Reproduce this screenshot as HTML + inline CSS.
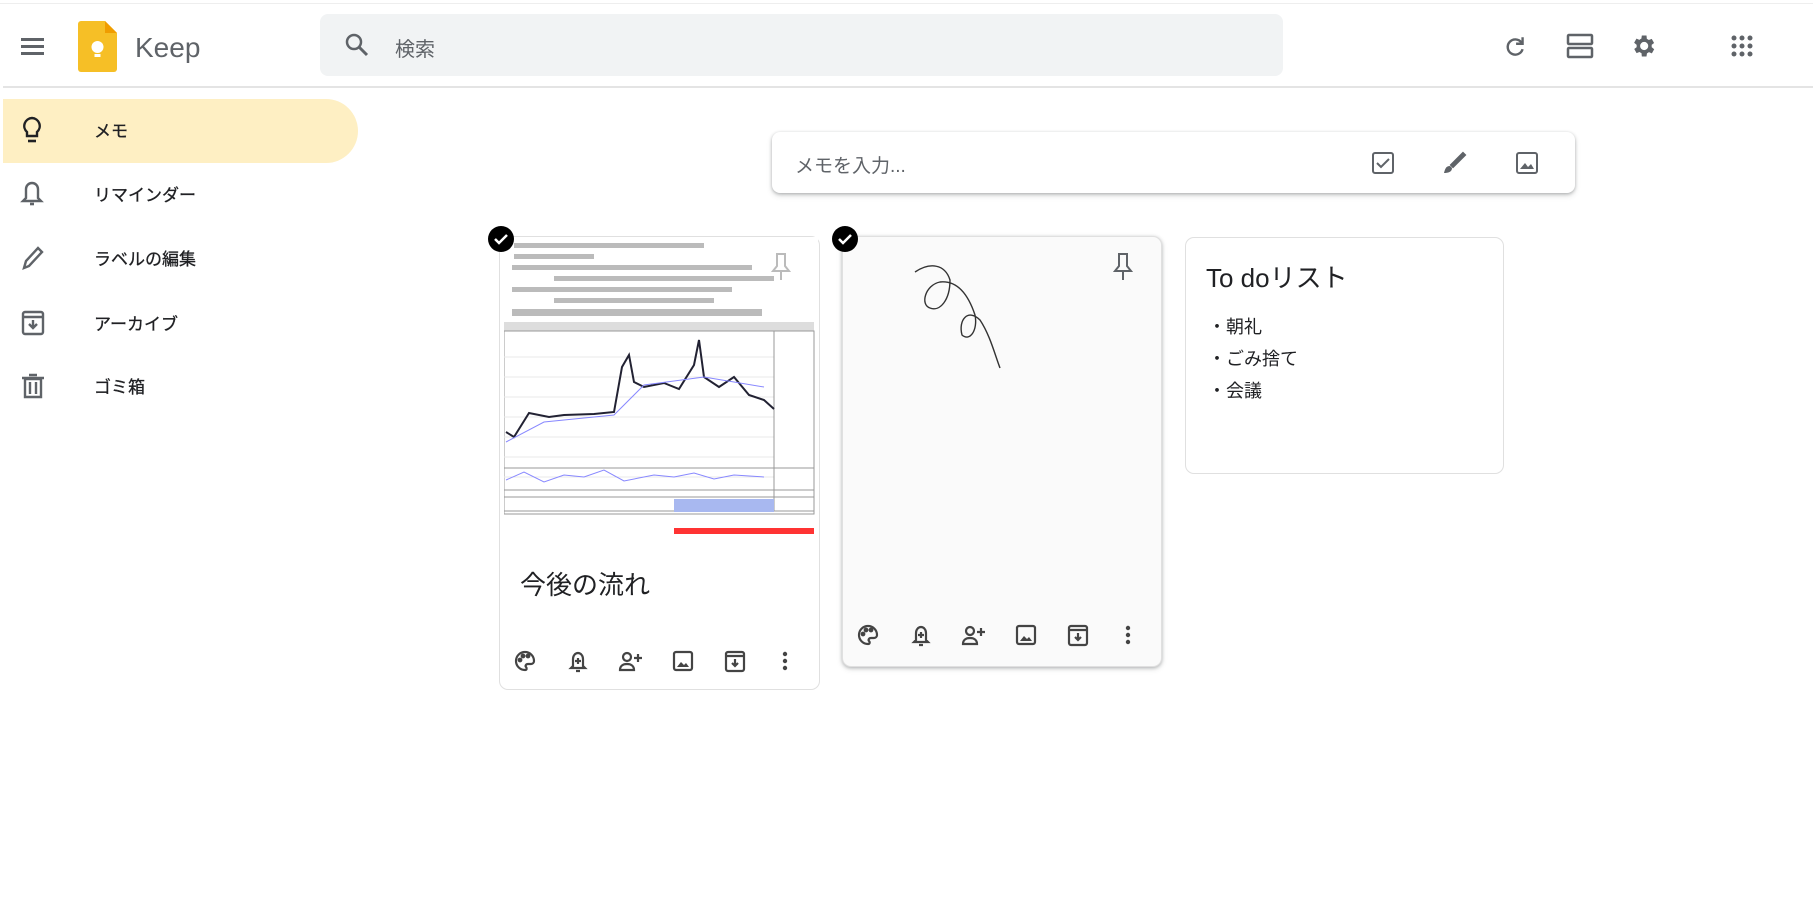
<!DOCTYPE html>
<html><head><meta charset="utf-8"><style>
*{box-sizing:border-box;margin:0;padding:0}
body{width:1813px;height:898px;background:#fff;font-family:"Liberation Sans","Noto Sans CJK JP",sans-serif;color:#202124;position:relative;overflow:hidden}
.a{position:absolute}
svg.i{position:absolute;fill:none;stroke:#5f6368;stroke-width:2}
.nav{position:absolute;left:94px;font-size:17px;color:#202124;-webkit-text-stroke:0.3px #202124}
.card{position:absolute;border:1px solid #e0e0e0;border-radius:9px;background:#fff}
.chk{position:absolute;width:26px;height:26px;border-radius:50%;background:#000}
</style></head><body>
<div class="a" style="left:0;top:3px;width:1813px;height:1px;background:#eee"></div>
<div class="a" style="left:3px;top:86px;width:1810px;height:2px;background:#e4e4e4"></div>
<div class="a" style="left:21px;top:38px;width:23px;height:2.5px;background:#5f6368;box-shadow:0 7px 0 #5f6368,0 14px 0 #5f6368"></div>
<svg class="a" style="left:78px;top:21px" width="39" height="51" viewBox="0 0 39 51"><path d="M3 0H27L39 12V48a3 3 0 0 1-3 3H3a3 3 0 0 1-3-3V3a3 3 0 0 1 3-3z" fill="#f6bf26"/><path d="M27 0V12H39z" fill="#f09d00"/><circle cx="19.5" cy="26" r="6" fill="#fff"/><rect x="16.5" y="33" width="6" height="3" fill="#fff"/></svg>
<div class="a" style="left:135px;top:32px;font-size:28px;color:#5f6368">Keep</div>
<div class="a" style="left:320px;top:14px;width:963px;height:62px;background:#f1f3f4;border-radius:8px"></div>
<svg class="i" style="left:344px;top:32px" width="26" height="26" viewBox="0 0 26 26"><circle cx="10" cy="10" r="7" stroke-width="2.5"/><path d="M15 15l8 8" stroke-width="3"/></svg>
<div class="a" style="left:395px;top:33px;font-size:20px;color:#5f6368">検索</div>
<svg class="i" style="left:1502px;top:34px" width="26" height="26" viewBox="0 0 24 24"><path d="M18 8A7 7 0 1 0 19 14" stroke-width="2.2"/><path d="M19 3v6h-6" stroke-width="2.2"/></svg>
<svg class="i" style="left:1566px;top:32px" width="28" height="28" viewBox="0 0 28 28"><rect x="2" y="3" width="24" height="9" rx="1" stroke-width="2.5"/><rect x="2" y="16" width="24" height="9" rx="1" stroke-width="2.5"/></svg>
<svg class="a" style="left:1629px;top:32px" width="28" height="28" viewBox="0 0 24 24"><path fill="#5f6368" d="M19.4 13a7.5 7.5 0 0 0 0-2l2.1-1.6-2-3.5-2.5 1a7.3 7.3 0 0 0-1.7-1L15 3h-4l-.4 2.7a7.3 7.3 0 0 0-1.700 1l-2.5-1-2 3.5L6.6 11a7.5 7.5 0 0 0 0 2l-2.1 1.6 2 3.5 2.5-1a7.3 7.3 0 0 0 1.7 1L11 21h4l.4-2.7a7.3 7.3 0 0 0 1.7-1l2.5 1 2-3.5zM13 15.5a3.5 3.5 0 1 1 0-7 3.5 3.5 0 0 1 0 7z"/><circle cx="13" cy="12" r="2.2" fill="#fff"/></svg>
<svg class="a" style="left:1731px;top:35px" width="22" height="22" viewBox="0 0 22 22" fill="#5f6368"><circle cx="3" cy="3" r="2.5"/><circle cx="11" cy="3" r="2.5"/><circle cx="19" cy="3" r="2.5"/><circle cx="3" cy="11" r="2.5"/><circle cx="11" cy="11" r="2.5"/><circle cx="19" cy="11" r="2.5"/><circle cx="3" cy="19" r="2.5"/><circle cx="11" cy="19" r="2.5"/><circle cx="19" cy="19" r="2.5"/></svg>
<div class="a" style="left:3px;top:99px;width:355px;height:64px;background:#feefc3;border-radius:0 32px 32px 0"></div>
<svg class="i" style="left:20px;top:116px" width="24" height="28" viewBox="0 0 24 28"><path d="M12 2a8 8 0 0 0-5 14v4h10v-4a8 8 0 0 0-5-14z" stroke="#202124" stroke-width="2.4"/><path d="M8 25h8" stroke="#202124" stroke-width="2.6"/></svg>
<div class="nav" style="top:117px">メモ</div>
<svg class="i" style="left:20px;top:180px" width="24" height="28" viewBox="0 0 24 28"><path d="M12 3a6 6 0 0 0-6 6v9l-3 3h18l-3-3V9a6 6 0 0 0-6-6z" stroke-width="2.4"/><path d="M10 24h4" stroke-width="2.6"/></svg>
<div class="nav" style="top:181px">リマインダー</div>
<svg class="i" style="left:20px;top:244px" width="26" height="28" viewBox="0 0 26 28"><path d="M4 24l2-7L18 4l4 4L9 22z" stroke-width="2.4"/></svg>
<div class="nav" style="top:245px">ラベルの編集</div>
<svg class="i" style="left:20px;top:309px" width="26" height="28" viewBox="0 0 26 28"><rect x="3" y="3" width="20" height="22" rx="2" stroke-width="2.4"/><path d="M3 8h20M13 11v8M9 15l4 4 4-4" stroke-width="2.4"/></svg>
<div class="nav" style="top:310px">アーカイブ</div>
<svg class="i" style="left:20px;top:372px" width="26" height="28" viewBox="0 0 26 28"><path d="M5 7h16v18H5zM2 6h22M9 3h8M10 10v12M16 10v12" stroke-width="2.4"/></svg>
<div class="nav" style="top:373px">ゴミ箱</div>
<div class="a" style="left:772px;top:132px;width:803px;height:61px;border-radius:8px;background:#fff;box-shadow:0 1px 3px rgba(60,64,67,.35),0 3px 6px rgba(60,64,67,.15)"></div>
<div class="a" style="left:795px;top:151px;font-size:19px;color:#5f6368">メモを入力...</div>
<svg class="i" style="left:1370px;top:150px" width="26" height="26" viewBox="0 0 26 26"><rect x="3" y="3" width="20" height="20" rx="2"/><path d="M7 13l4 4 8-8"/></svg>
<svg class="i" style="left:1441px;top:150px" width="26" height="26" viewBox="0 0 26 26"><path d="M22 3L10 15l2 2L24 5z" fill="#5f6368"/><path d="M9 16c-4 0-5 3-6 7 4 0 8-1 8-5z" fill="#5f6368" stroke="none"/></svg>
<svg class="i" style="left:1514px;top:150px" width="26" height="26" viewBox="0 0 26 26"><rect x="3" y="3" width="20" height="20" rx="2"/><path d="M6 19l5-6 3 4 3-3 3 5z" fill="#5f6368" stroke="none"/></svg>
<div class="card" style="left:499px;top:236px;width:321px;height:454px"></div>
<svg class="a" style="left:504px;top:237px" width="314" height="306" viewBox="0 0 314 306">
<rect width="314" height="306" fill="#fff"/>
<g fill="#bbb"><rect x="10" y="6" width="190" height="5"/><rect x="10" y="17" width="80" height="5"/><rect x="8" y="28" width="240" height="5"/><rect x="50" y="39" width="220" height="5"/><rect x="8" y="50" width="220" height="5"/><rect x="50" y="61" width="160" height="5"/><rect x="8" y="72" width="250" height="7"/></g>
<rect x="0" y="85" width="310" height="9" fill="#ddd"/>
<rect x="0" y="94" width="310" height="180" fill="none" stroke="#999"/>
<g stroke="#e8e8e8"><path d="M0 120h270M0 140h270M0 160h270M0 180h270M0 200h270M0 220h270M0 240h270"/></g>
<path d="M270 94v180" stroke="#999"/>
<polyline fill="none" stroke="#223" stroke-width="2" points="2,195 10,200 25,176 45,180 60,178 90,177 110,175 118,130 125,118 130,145 140,150 160,146 175,152 190,128 195,103 200,140 215,150 230,140 245,158 260,163 270,172"/>
<polyline fill="none" stroke="#88f" stroke-width="1" points="2,205 40,185 110,178 140,148 200,140 260,150"/>
<path d="M0 231h310M0 253h310" stroke="#999"/>
<polyline fill="none" stroke="#88f" points="2,243 20,235 40,245 60,238 80,240 100,233 120,244 150,238 170,240 190,236 210,242 230,238 260,240"/>
<rect x="0" y="260" width="310" height="17" fill="none" stroke="#999"/>
<rect x="170" y="262" width="100" height="13" fill="#a8b8f0"/>
<rect x="170" y="291" width="140" height="6" fill="#f33"/>
</svg>
<div class="chk" style="left:488px;top:226px"></div>
<svg class="a" style="left:493px;top:231px" width="16" height="16" viewBox="0 0 16 16"><path d="M2 8l4 4 8-8" stroke="#fff" stroke-width="2.5" fill="none"/></svg>
<svg class="i" style="left:768px;top:252px" width="26" height="30" viewBox="0 0 26 30"><path d="M8 2h10M9 2v12l-4 5h16l-4-5V2M13 19v9" stroke="#bbb"/></svg>
<div class="a" style="left:520px;top:565px;font-size:26px">今後の流れ</div>
<div class="card" style="left:842px;top:236px;width:320px;height:431px;background:#fafafa;box-shadow:0 1px 3px rgba(60,64,67,.3),0 2px 6px rgba(60,64,67,.15)"></div>
<div class="chk" style="left:832px;top:226px"></div>
<svg class="a" style="left:837px;top:231px" width="16" height="16" viewBox="0 0 16 16"><path d="M2 8l4 4 8-8" stroke="#fff" stroke-width="2.5" fill="none"/></svg>
<svg class="i" style="left:1110px;top:252px" width="26" height="30" viewBox="0 0 26 30"><path d="M8 2h10M9 2v12l-4 5h16l-4-5V2M13 19v9"/></svg>
<svg class="a" style="left:900px;top:260px" width="140" height="120" viewBox="0 0 140 120"><path d="M15 12C30 2 45 4 50 20 50 40 40 52 30 48 20 45 25 25 40 22 60 20 70 40 75 55 78 70 70 82 62 75 58 60 68 48 80 60 90 75 95 95 100 108" fill="none" stroke="#333" stroke-width="1.4"/></svg>
<div class="card" style="left:1185px;top:237px;width:319px;height:237px"></div>
<div class="a" style="left:1206px;top:258px;font-size:26px">To doリスト</div>
<div class="a" style="left:1208px;top:311px;font-size:18px;line-height:32px">・朝礼<br>・ごみ捨て<br>・会議</div>
<svg width="0" height="0" style="position:absolute"><defs>
<g id="ic">
<g><path d="M11 2a9 9 0 0 0 0 18c2 0 2-2 1-3-1-1 0-3 2-3h3a3 3 0 0 0 3-3c0-5-4-9-9-9z"/><circle cx="6" cy="10" r="1.3" fill="#444"/><circle cx="9" cy="6" r="1.3" fill="#444"/><circle cx="14" cy="6" r="1.3" fill="#444"/></g>
<g transform="translate(53,0)"><path d="M11 3c-3 0-5 3-5 6v7l-2 2h14l-2-2V9c0-3-2-6-5-6zM9 21h4M11 8v6M8 11h6"/></g>
<g transform="translate(105,0)"><circle cx="8" cy="7" r="4"/><path d="M1 20c0-4 3-6 7-6s7 2 7 6zM19 4v8M15 8h8"/></g>
<g transform="translate(158,0)"><rect x="2" y="2" width="18" height="18" rx="2"/><path d="M5 17l4-5 3 3 2-2 3 4z" fill="#444" stroke="none"/></g>
<g transform="translate(210,0)"><rect x="2" y="2" width="18" height="19" rx="2"/><path d="M2 6h18M11 9v7M8 13l3 3 3-3"/></g>
<g transform="translate(260,0)" fill="#444" stroke="none"><circle cx="11" cy="4" r="2.2"/><circle cx="11" cy="11" r="2.2"/><circle cx="11" cy="18" r="2.2"/></g>
</g></defs></svg>
<svg class="i" style="left:514px;top:650px;stroke:#444;stroke-width:2.2" width="290" height="24" viewBox="0 0 290 24"><use href="#ic"/></svg>
<svg class="i" style="left:857px;top:624px;stroke:#444;stroke-width:2.2" width="290" height="24" viewBox="0 0 290 24"><use href="#ic"/></svg>
</body></html>
